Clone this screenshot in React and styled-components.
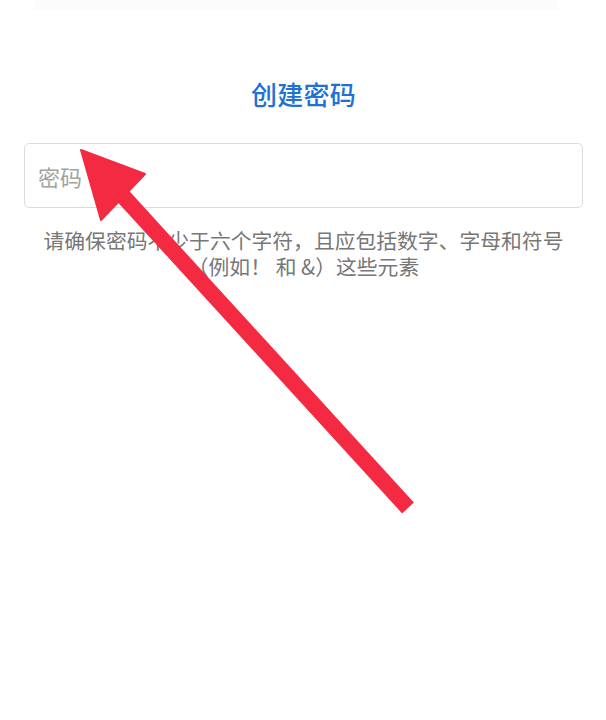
import React from "react";
import styled, { createGlobalStyle } from "styled-components";

const Global = createGlobalStyle`
  html, body {
    margin: 0;
    padding: 0;
    background: #ffffff;
  }
  body {
    font-family: "Noto Sans CJK SC", "Noto Sans", sans-serif;
  }
`;

const Page = styled.div`
  position: relative;
  width: 606px;
  height: 720px;
  box-sizing: border-box;
  padding: 0 23px 0 24px;
  display: flex;
  flex-direction: column;
  overflow: hidden;
`;

const TopBand = styled.div`
  height: 10px;
  width: 525px;
  margin-left: 9px;
  background: #fcfcfc;
`;

const Title = styled.h1`
  margin: 67px 0 0;
  font-size: 26px;
  line-height: 34px;
  font-weight: 500;
  color: #2170d6;
  text-align: center;
  letter-spacing: 0.3px;
`;

const Field = styled.input`
  margin-top: 32px;
  height: 65px;
  box-sizing: border-box;
  width: 100%;
  border: 1px solid #dcdcdc;
  border-radius: 5px;
  padding: 0 13px;
  font-family: "Noto Sans CJK SC", "Noto Sans", sans-serif;
  font-size: 22px;
  color: #333;
  outline: none;
  background: #fff;
  &::placeholder {
    color: #a3a3a3;
  }
`;

const Hint = styled.div`
  margin: 19px 0 0;
  font-size: 20.8px;
  color: #777777;
  text-align: center;
  display: flex;
  flex-direction: column;
  align-items: center;
`;

const HintLine = styled.p`
  margin: 0;
  height: 26px;
  line-height: 26px;
  white-space: nowrap;
`;

const ArrowLayer = styled.svg`
  position: absolute;
  left: 0;
  top: 0;
  width: 606px;
  height: 720px;
  pointer-events: none;
`;

export default function App() {
  const color = "#f42a42";
  return (
    <>
      <Global />
      <Page>
        <TopBand />
        <Title>创建密码</Title>
        <Field type="password" placeholder="密码" />
        <Hint>
          <HintLine>请确保密码不少于六个字符，且应包括数字、字母和符号</HintLine>
          <HintLine>（例如！ 和 &amp;）这些元素</HintLine>
        </Hint>
        <ArrowLayer viewBox="0 0 606 720">
          <line
            x1="408"
            y1="508"
            x2="122"
            y2="195"
            stroke={color}
            strokeWidth="16"
            strokeLinecap="butt"
          />
          <polygon
            points="81,150 145,174 101,220"
            fill={color}
            stroke={color}
            strokeWidth="2"
            strokeLinejoin="round"
          />
        </ArrowLayer>
      </Page>
    </>
  );
}
